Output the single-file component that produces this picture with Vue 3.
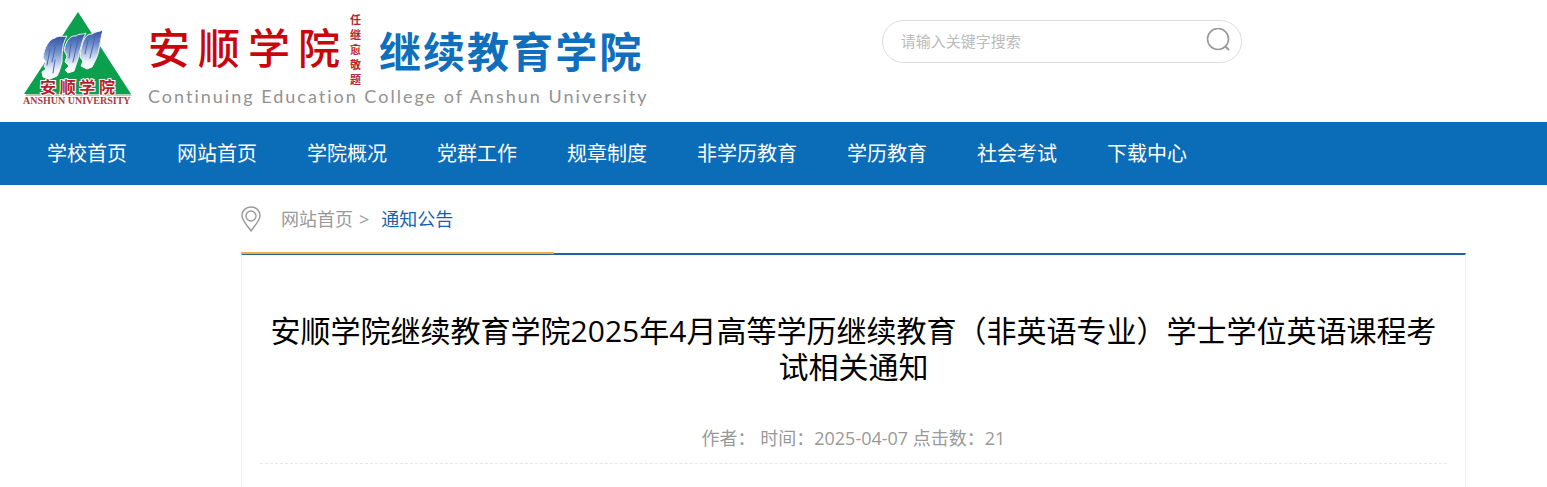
<template>
  <div class="page">
    <header class="header">
      <a class="logo" href="#" aria-label="安顺学院继续教育学院">
        <svg class="emblem" viewBox="0 0 112 96" width="112" height="96" aria-hidden="true">
          <defs>
            <linearGradient id="feather" x1="0" y1="0" x2="0" y2="1">
              <stop offset="0" stop-color="#34509f" />
              <stop offset="0.35" stop-color="#6c8bca" />
              <stop offset="0.8" stop-color="#eef3fb" />
              <stop offset="1" stop-color="#ffffff" />
            </linearGradient>
          </defs>
          <path d="M56 1 L110 84 H3 Z" fill="#b7c9bd" />
          <path d="M56 0 L109 82 H2 Z" fill="#0b9f4e" />
          <g fill="url(#feather)" stroke="#f4f8fc" stroke-width="1" stroke-linejoin="round">
            <path d="M21 46 C22 36 27 27 33 26 C37 23 41 25 45 24 C40 32 40 42 40 50 L37 60 L35 64 L28 67 L21 65 L20 60 L24 57 L22 54 L24 50 Z" />
            <path d="M42 38 C44 28 49 23 54 24 C58 21 61 23 64 21 C58 32 58 43 54 53 L52 59 L46 61 L43 58 L47 54 L43 50 L45 44 Z" />
            <path d="M59 38 C61 27 64 22 70 22 C74 19 77 20 81 18 C78 27 78 40 73 49 L70 55 L65 57 L59 54 L61 49 L58 45 Z" />
          </g>
          <g fill="none" stroke="#4a66ae" stroke-width="1" stroke-linecap="round">
            <path d="M28 37 L25 53 M34 31 L30 50 M33 48 L31 61" />
            <path d="M49 32 L47 46 M56 28 L51 50" />
            <path d="M66 28 L63 42 M73 25 L68 46" />
          </g>
          <text class="emblem-name" x="18" y="81">安 顺 学 院</text>
          <text class="emblem-latin" x="1" y="92">ANSHUN UNIVERSITY</text>
        </svg>
        <span class="logo-text">
          <span class="logo-names">
            <span class="school">
              <span v-for="(word, i) in school" :key="i">{{ word }}</span>
            </span>
            <span class="signature">
              <span v-for="(word, i) in signature" :key="i">{{ word }}</span>
            </span>
            <span class="college">
              <span v-for="(word, i) in college" :key="i">{{ word }}</span>
            </span>
          </span>
          <span class="logo-en">Continuing Education College of Anshun University</span>
        </span>
      </a>

      <form class="search" @submit.prevent>
        <input v-model="keyword" type="text" placeholder="请输入关键字搜索" aria-label="请输入关键字搜索" />
        <button type="submit" aria-label="搜索">
          <svg viewBox="0 0 24 24" width="24" height="24" fill="none" stroke="#999" stroke-width="1.6">
            <circle cx="12" cy="11" r="10.500" />
            <path d="M19 18 L23 22" stroke-width="2" />
          </svg>
        </button>
      </form>
    </header>

    <nav class="nav">
      <a v-for="item in navItems" :key="item" href="#">{{ item }}</a>
    </nav>

    <main class="content">
      <div class="crumbs">
        <svg class="pin" viewBox="0 0 20 26" width="20" height="26" fill="none" stroke="#999" stroke-width="1.4">
          <path d="M10 25 C7 20 1 15 1 9.500 C1 4.500 5 1 10 1 C15 1 19 4.500 19 9.500 C19 15 13 20 10 25 Z" />
          <circle cx="10" cy="10" r="5" />
        </svg>
        <a href="#">网站首页</a>
        <span class="sep">&gt;</span>
        <a class="current" href="#">通知公告</a>
      </div>

      <article class="article">
        <h1>安顺学院继续教育学院2025年4月高等学历继续教育（非英语专业）学士学位英语课程考试相关通知</h1>
        <p class="meta">作者： 时间：2025-04-07 点击数：21</p>
      </article>
    </main>
  </div>
</template>

<script setup>
import { ref } from 'vue';

const keyword = ref('');

// logo 文字
const school = [...'安顺学院'];
const signature = [...'任继愈敬题'];
const college = [...'继续教育学院'];

// 主导航
const navItems = [
  '学校首页',
  '网站首页',
  '学院概况',
  '党群工作',
  '规章制度',
  '非学历教育',
  '学历教育',
  '社会考试',
  '下载中心'
];
</script>

<style>
body {
  margin: 0;
  background: #fff;
}
</style>

<style scoped>
.page {
  font-family: "Open Sans", "Noto Sans CJK SC", sans-serif;
  color: #000;
}

a {
  color: inherit;
  text-decoration: none;
}

.header {
  display: flex;
  align-items: flex-start;
  height: 122px;
}

.logo {
  display: flex;
  flex: 0 0 57%;
  box-sizing: border-box;
  padding: 12px 0 0 22px;
}

.emblem {
  flex: none;
}

.emblem-name {
  font-family: "Noto Sans CJK SC", sans-serif;
  font-size: 16px;
  font-weight: 700;
  fill: #b51f2c;
  stroke: #fff;
  stroke-width: 2px;
  paint-order: stroke;
}

.emblem-latin {
  font-family: "Liberation Serif", serif;
  font-size: 10px;
  font-weight: 700;
  fill: #a83a40;
}

.logo-text {
  display: flex;
  flex-direction: column;
  margin-left: 14px;
}

.logo-names {
  display: flex;
  height: 72px;
}

.school,
.college {
  display: flex;
  font-family: "Noto Sans CJK SC", sans-serif;
}

.school {
  gap: 8px;
  font-size: 42px;
  font-weight: 500;
  line-height: 68px;
  color: #c8060b;
}

.signature {
  display: flex;
  flex-direction: column;
  margin: 0 18px 0 10px;
  font-size: 11px;
  font-weight: 700;
  line-height: 15px;
  color: #b5262b;
}

.college {
  gap: 2px;
  font-size: 42px;
  font-weight: 700;
  line-height: 76px;
  color: #0f6fbd;
}

.logo-en {
  font-family: Lato, sans-serif;
  font-size: 18px;
  line-height: 24px;
  letter-spacing: 2px;
  white-space: nowrap;
  color: #929292;
}

.search {
  display: flex;
  align-items: center;
  box-sizing: border-box;
  width: 360px;
  height: 43px;
  margin-top: 20px;
  padding: 0 11px 0 18px;
  border: 1px solid #ddd;
  border-radius: 22px;
}

.search input {
  flex: 1;
  min-width: 0;
  padding: 0 0 2px;
  border: 0;
  outline: 0;
  background: none;
  font: inherit;
  font-size: 15px;
  color: #666;
}

.search input::placeholder {
  color: #bbb;
}

.search button {
  display: flex;
  padding: 0 0 4px;
  border: 0;
  background: none;
  cursor: pointer;
}

.nav {
  display: flex;
  gap: 50px;
  padding: 1px 47px 0;
  background: #0b6cb8;
  font-size: 20px;
  line-height: 62px;
  white-space: nowrap;
  color: #fff;
}

.content {
  margin: 0 81px 0 241px;
}

.crumbs {
  display: flex;
  align-items: center;
  height: 68px;
  font-size: 18px;
  line-height: 24px;
  color: #999;
}

.pin {
  margin-right: 20px;
}

.sep {
  margin: 0 12px 0 6px;
}

.current {
  color: #1363ae;
}

.article {
  position: relative;
  min-height: 174px;
  padding: 58px 18px 0;
  border: 1px solid #eee;
  border-top: 2px solid #27639a;
  border-bottom: 0;
}

.article::before {
  content: "";
  position: absolute;
  top: -3px;
  left: -1px;
  width: 313px;
  height: 2px;
  background: #edb04e;
}

h1 {
  margin: 0;
  font-size: 30px;
  font-weight: 400;
  line-height: 36px;
  text-align: center;
}

.meta {
  margin: 28px 0 0;
  border-bottom: 1px dashed #e6e6e6;
  font-size: 18px;
  line-height: 50px;
  text-align: center;
  color: #999;
}
</style>
